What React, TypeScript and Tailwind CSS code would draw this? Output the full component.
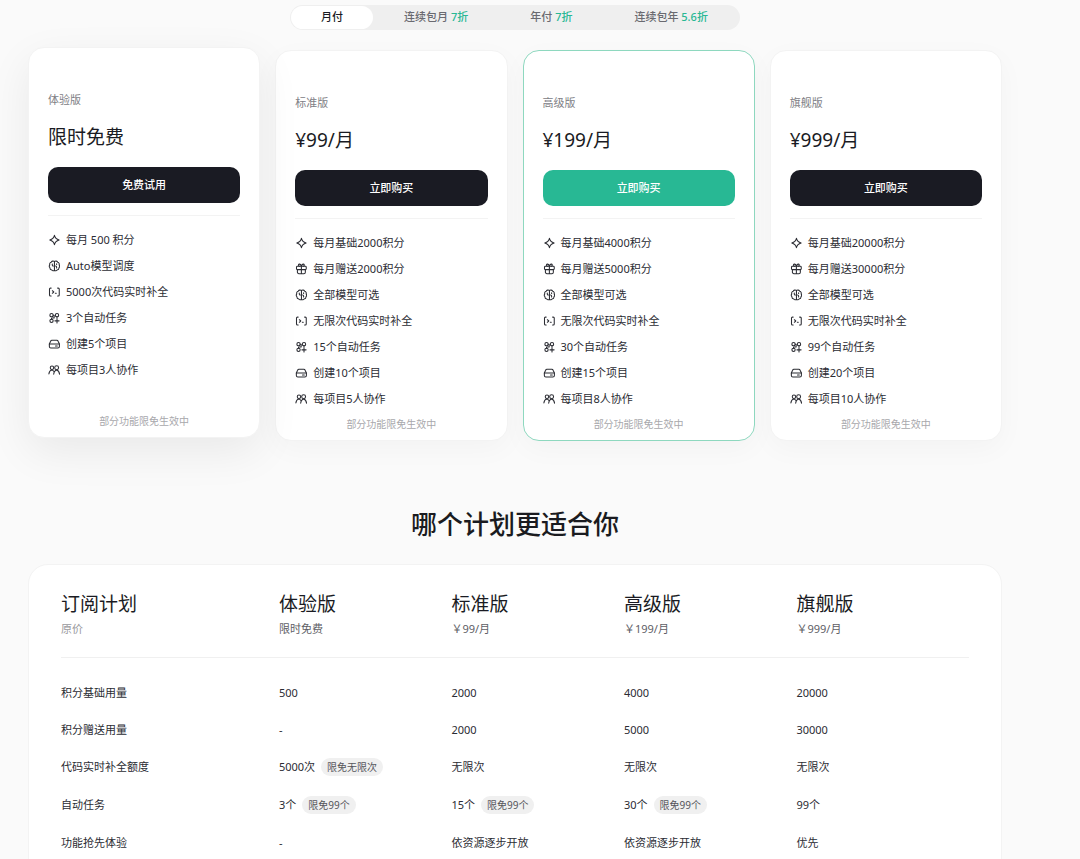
import { useState } from "react";
import type { ReactNode } from "react";

type IconName = "spark" | "gift" | "model" | "code" | "task" | "project" | "team";

type Plan = {
  name: string;
  price: string;
  action: string;
  highlight?: boolean;
  raised?: boolean;
  features: { icon: IconName; text: string }[];
};

type Cell = { text: string; badge?: string };

const BILLING = [
  { label: "月付", discount: "" },
  { label: "连续包月", discount: "7折" },
  { label: "年付", discount: "7折" },
  { label: "连续包年", discount: "5.6折" },
];

const PLANS: Plan[] = [
  {
    name: "体验版",
    price: "限时免费",
    action: "免费试用",
    raised: true,
    features: [
      { icon: "spark", text: "每月 500 积分" },
      { icon: "model", text: "Auto模型调度" },
      { icon: "code", text: "5000次代码实时补全" },
      { icon: "task", text: "3个自动任务" },
      { icon: "project", text: "创建5个项目" },
      { icon: "team", text: "每项目3人协作" },
    ],
  },
  {
    name: "标准版",
    price: "¥99/月",
    action: "立即购买",
    features: [
      { icon: "spark", text: "每月基础2000积分" },
      { icon: "gift", text: "每月赠送2000积分" },
      { icon: "model", text: "全部模型可选" },
      { icon: "code", text: "无限次代码实时补全" },
      { icon: "task", text: "15个自动任务" },
      { icon: "project", text: "创建10个项目" },
      { icon: "team", text: "每项目5人协作" },
    ],
  },
  {
    name: "高级版",
    price: "¥199/月",
    action: "立即购买",
    highlight: true,
    features: [
      { icon: "spark", text: "每月基础4000积分" },
      { icon: "gift", text: "每月赠送5000积分" },
      { icon: "model", text: "全部模型可选" },
      { icon: "code", text: "无限次代码实时补全" },
      { icon: "task", text: "30个自动任务" },
      { icon: "project", text: "创建15个项目" },
      { icon: "team", text: "每项目8人协作" },
    ],
  },
  {
    name: "旗舰版",
    price: "¥999/月",
    action: "立即购买",
    features: [
      { icon: "spark", text: "每月基础20000积分" },
      { icon: "gift", text: "每月赠送30000积分" },
      { icon: "model", text: "全部模型可选" },
      { icon: "code", text: "无限次代码实时补全" },
      { icon: "task", text: "99个自动任务" },
      { icon: "project", text: "创建20个项目" },
      { icon: "team", text: "每项目10人协作" },
    ],
  },
];

const COLUMNS = [
  { title: "体验版", price: "限时免费" },
  { title: "标准版", price: "￥99/月" },
  { title: "高级版", price: "￥199/月" },
  { title: "旗舰版", price: "￥999/月" },
];

const ROWS: { label: string; cells: Cell[] }[] = [
  {
    label: "积分基础用量",
    cells: [{ text: "500" }, { text: "2000" }, { text: "4000" }, { text: "20000" }],
  },
  {
    label: "积分赠送用量",
    cells: [{ text: "-" }, { text: "2000" }, { text: "5000" }, { text: "30000" }],
  },
  {
    label: "代码实时补全额度",
    cells: [
      { text: "5000次", badge: "限免无限次" },
      { text: "无限次" },
      { text: "无限次" },
      { text: "无限次" },
    ],
  },
  {
    label: "自动任务",
    cells: [
      { text: "3个", badge: "限免99个" },
      { text: "15个", badge: "限免99个" },
      { text: "30个", badge: "限免99个" },
      { text: "99个" },
    ],
  },
  {
    label: "功能抢先体验",
    cells: [
      { text: "-" },
      { text: "依资源逐步开放" },
      { text: "依资源逐步开放" },
      { text: "优先" },
    ],
  },
];

const ICONS: Record<IconName, ReactNode> = {
  spark: (
    <path d="M8.600 1.800c.8 3.200 2.200 5 6.200 6.200-4 1.200-5.400 3-6.200 6.200-.8-3.200-2.200-5-6.200-6.200C6.400 6.800 7.800 5 8.600 1.800Z" />
  ),
  gift: (
    <>
      <rect x="2" y="4.300" width="13" height="4.500" rx="1.200" />
      <path d="M3.200 8.800v3.400a2 2 0 0 0 2 2h6.600a2 2 0 0 0 2-2V8.800M8.500 4.300v9.900" />
      <path d="M8.500 4.300C7.800 2.100 6.800 1.300 5.700 1.500c-1.600.4-1.400 2.800.3 2.800M8.500 4.300c.7-2.200 1.700-3 2.800-2.800 1.600.4 1.400 2.800-.3 2.800" />
    </>
  ),
  model: (
    <>
      <path d="M8.600 2C7.100.9 4.900 1.400 4.200 3.100 2.500 3.600 1.800 5.200 2.400 6.600 1.400 7.600 1.400 9.300 2.500 10.200c0 1.700 1 2.900 2.600 3.100.8 1.300 2.600 1.500 3.500.5.900 1 2.700.8 3.500-.5 1.600-.2 2.600-1.400 2.600-3.100 1.100-.9 1.100-2.600.1-3.600.6-1.400-.1-3-1.800-3.500C12.300 1.400 10.100.9 8.600 2Z" />
      <path d="M8.600 2v11.800M5.700 5.300v1.200a1.600 1.600 0 0 0 1.400 1.600M11.500 10.700V9.500a1.600 1.600 0 0 0-1.400-1.600M11.500 5v1" />
    </>
  ),
  code: (
    <>
      <path d="M4.200 2.800H3.300a1.300 1.300 0 0 0-1.300 1.300v7.800a1.300 1.300 0 0 0 1.300 1.300h.9M12.800 2.800h.9A1.300 1.300 0 0 1 15 4.100v7.800a1.300 1.300 0 0 1-1.300 1.300h-.9" />
      <path d="m5.800 6.300 1.900 1.700-1.900 1.700M9.800 9.700h1.200" />
    </>
  ),
  task: (
    <>
      <circle cx="4.700" cy="4.200" r="2.200" />
      <circle cx="12" cy="4.200" r="2.200" />
      <circle cx="4.700" cy="11.800" r="2.200" />
      <path d="M12 9v5.600M9.200 11.800h5.600M6.900 4.200h1.300v3.800H4.700v1.600M12 6.400V8" />
    </>
  ),
  project: (
    <>
      <path d="M1.800 8 3.500 4.300a2 2 0 0 1 1.800-1.300h6.400a2 2 0 0 1 1.800 1.300L15.200 8v3.200a2 2 0 0 1-2 2H3.800a2 2 0 0 1-2-2Z" />
      <path d="M1.800 8h13.400M10 10.700h2.400" />
    </>
  ),
  team: (
    <>
      <circle cx="5.300" cy="5" r="2.300" />
      <circle cx="11.500" cy="5" r="2.600" />
      <path d="M1.200 13.200c.3-2.900 1.700-4.700 3.800-5.200 1.200.2 2 .8 2.500 1.600M7.600 13.500c.4-3.100 1.800-5.200 3.900-5.600 2.200.5 3.500 2.600 3.900 5.600" />
    </>
  ),
};

function FeatureIcon({ name }: { name: IconName }) {
  return (
    <svg
      viewBox="0 0 16 16"
      className="size-3 shrink-0"
      fill="none"
      stroke="currentColor"
      strokeWidth="1.400"
      strokeLinecap="round"
      strokeLinejoin="round"
      aria-hidden="true"
    >
      {ICONS[name]}
    </svg>
  );
}

function getCardClass(plan: Plan) {
  if (plan.raised) {
    return "border-[#f3f3f3] -translate-y-[3px] shadow-[0_14px_44px_rgba(0,0,0,0.07)]";
  }
  if (plan.highlight) return "border-[#8ed8bf] shadow-[0_8px_28px_rgba(0,0,0,0.03)]";
  return "border-[#f3f3f3] shadow-[0_8px_28px_rgba(0,0,0,0.03)]";
}

function PlanCard({ plan }: { plan: Plan }) {
  return (
    <article
      className={`flex flex-col rounded-2xl border bg-white px-[19px] pt-[42px] pb-2 ${getCardClass(plan)}`}
    >
      <h2 className="text-[11px] leading-5 text-[#808085]">{plan.name}</h2>
      <p className="mt-[11px] text-[19px] leading-8 text-[#1a1b23]">{plan.price}</p>
      <button
        type="button"
        className={`mt-[14px] h-9 rounded-[10px] text-[11px] font-medium text-white ${
          plan.highlight ? "bg-[#28b894]" : "bg-[#1a1b23]"
        }`}
      >
        {plan.action}
      </button>
      <hr className="mt-3 border-[#f3f3f3]" />
      <ul className="mt-[14px] flex flex-col gap-[6px]">
        {plan.features.map((feature) => (
          <li
            key={feature.text}
            className="flex items-center gap-[6px] text-[11px] leading-5 text-[#2b2c33]"
          >
            <FeatureIcon name={feature.icon} />
            {feature.text}
          </li>
        ))}
      </ul>
      <p className="mt-auto pt-[7px] text-center text-[10px] leading-4 text-[#a8a8ac]">
        部分功能限免生效中
      </p>
    </article>
  );
}

export default function App() {
  const [billing, setBilling] = useState(0);

  return (
    <main className="min-h-screen bg-[#fafafa] pt-[5px] pr-[78px] pl-7 font-['Noto_Sans','Noto_Sans_CJK_SC',sans-serif]">
      <div className="mx-auto flex h-[25px] w-fit rounded-full bg-[#efefef] p-px">
        {BILLING.map((item, index) => (
          <button
            key={item.label}
            type="button"
            onClick={() => setBilling(index)}
            className={`rounded-full text-[11px] font-medium ${
              index === billing
                ? "bg-white px-[30px] text-[#1a1b23]"
                : "px-[31px] text-[#6a6a70]"
            }`}
          >
            {item.label}
            {item.discount && <span className="text-[#28b894]"> {item.discount}</span>}
          </button>
        ))}
      </div>

      <section className="mt-5 grid grid-cols-4 gap-[15px]">
        {PLANS.map((plan) => (
          <PlanCard key={plan.name} plan={plan} />
        ))}
      </section>

      <h2 className="mt-[65px] text-center text-[26px] leading-9 font-medium text-[#1a1b20]">
        哪个计划更适合你
      </h2>

      <section className="mt-[22px] rounded-[20px] border border-[#f3f3f3] bg-white px-8 pt-[25px] pb-10">
        <table className="w-full table-fixed border-collapse text-left text-[11px] text-[#2b2c33]">
          <colgroup>
            <col className="w-[24%]" />
            <col className="w-[19%]" />
            <col className="w-[19%]" />
            <col className="w-[19%]" />
            <col className="w-[19%]" />
          </colgroup>
          <thead>
            <tr className="border-b border-[#f0f0f0]">
              <th className="pb-[18px] font-normal">
                <div className="text-[19px] leading-7 text-[#1a1b23]">订阅计划</div>
                <div className="mt-px leading-5 text-[#9a9a9e]">原价</div>
              </th>
              {COLUMNS.map((column) => (
                <th key={column.title} className="pb-[18px] font-normal">
                  <div className="text-[19px] leading-7 text-[#1a1b23]">{column.title}</div>
                  <div className="mt-px leading-5 text-[#606066]">{column.price}</div>
                </th>
              ))}
            </tr>
          </thead>
          <tbody>
            <tr aria-hidden="true">
              <td colSpan={5} className="h-4" />
            </tr>
            {ROWS.map((row) => (
              <tr key={row.label}>
                <th className="py-[10px] leading-[17px] font-normal">{row.label}</th>
                {row.cells.map((cell, index) => (
                  <td key={index} className="py-[10px]">
                    <div className="flex items-center gap-[6px] leading-[17px]">
                      {cell.text}
                      {cell.badge && (
                        <span className="rounded-full bg-[#f0f0f0] px-[6px] text-[10px] leading-[18px] text-[#55555b]">
                          {cell.badge}
                        </span>
                      )}
                    </div>
                  </td>
                ))}
              </tr>
            ))}
          </tbody>
        </table>
      </section>
    </main>
  );
}
